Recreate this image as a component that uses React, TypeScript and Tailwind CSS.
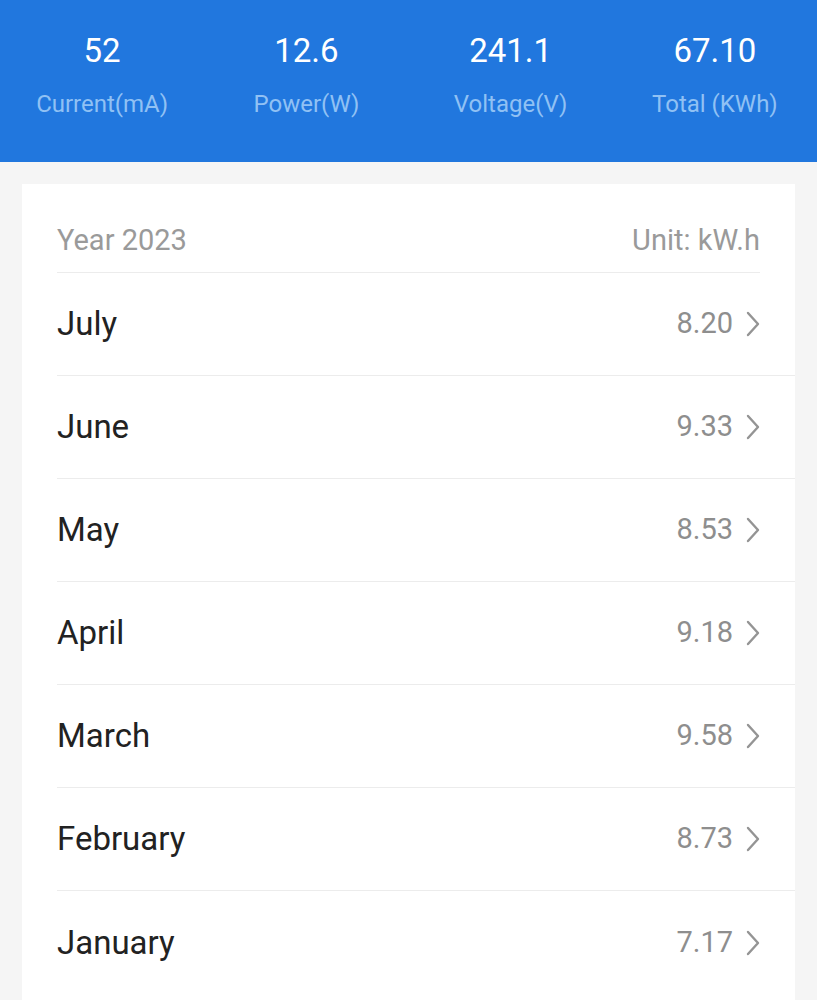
const stats = [
  { value: '52', label: 'Current(mA)' },
  { value: '12.6', label: 'Power(W)' },
  { value: '241.1', label: 'Voltage(V)' },
  { value: '67.10', label: 'Total (KWh)' },
];

const months = [
  { name: 'July', value: '8.20' },
  { name: 'June', value: '9.33' },
  { name: 'May', value: '8.53' },
  { name: 'April', value: '9.18' },
  { name: 'March', value: '9.58' },
  { name: 'February', value: '8.73' },
  { name: 'January', value: '7.17' },
];

function Chevron() {
  return (
    <svg width="14" height="26" viewBox="0 0 14 26" fill="none" className="ml-[13px]">
      <polyline points="2,2 12,13 2,24" stroke="#949494" strokeWidth="2.4" strokeLinecap="round" strokeLinejoin="round" />
    </svg>
  );
}

export default function App() {
  return (
    <div className="min-h-screen bg-[#f5f5f5] font-['Roboto',sans-serif]">
      {/* Live readings */}
      <div className="grid h-[162px] grid-cols-4 bg-[#2177de] pt-[31px]">
        {stats.map((s) => (
          <div key={s.label} className="flex flex-col items-center">
            <div className="text-[33px] leading-[40px] text-white">{s.value}</div>
            <div className="mt-[18px] text-[24px] leading-[30px] text-[#90c1f4]">{s.label}</div>
          </div>
        ))}
      </div>

      {/* Monthly totals */}
      <div className="mx-[22px] mt-[22px] bg-white pb-[20px]">
        <div className="mx-[35px] flex items-center justify-between border-b border-[#ececec] pt-[40px] pb-[15px] text-[29px] leading-[33px] text-[#9a9a9a]">
          <span>Year 2023</span>
          <span>Unit: kW.h</span>
        </div>
        {months.map((m) => (
          <div key={m.name} className="ml-[35px] flex h-[103px] items-center justify-between border-b border-[#ececec] pr-[35px] last:border-b-0">
            <span className="text-[33px] text-[#222222]">{m.name}</span>
            <div className="flex items-center">
              <span className="text-[29px] text-[#8e8e8e]">{m.value}</span>
              <Chevron />
            </div>
          </div>
        ))}
      </div>
    </div>
  );
}
